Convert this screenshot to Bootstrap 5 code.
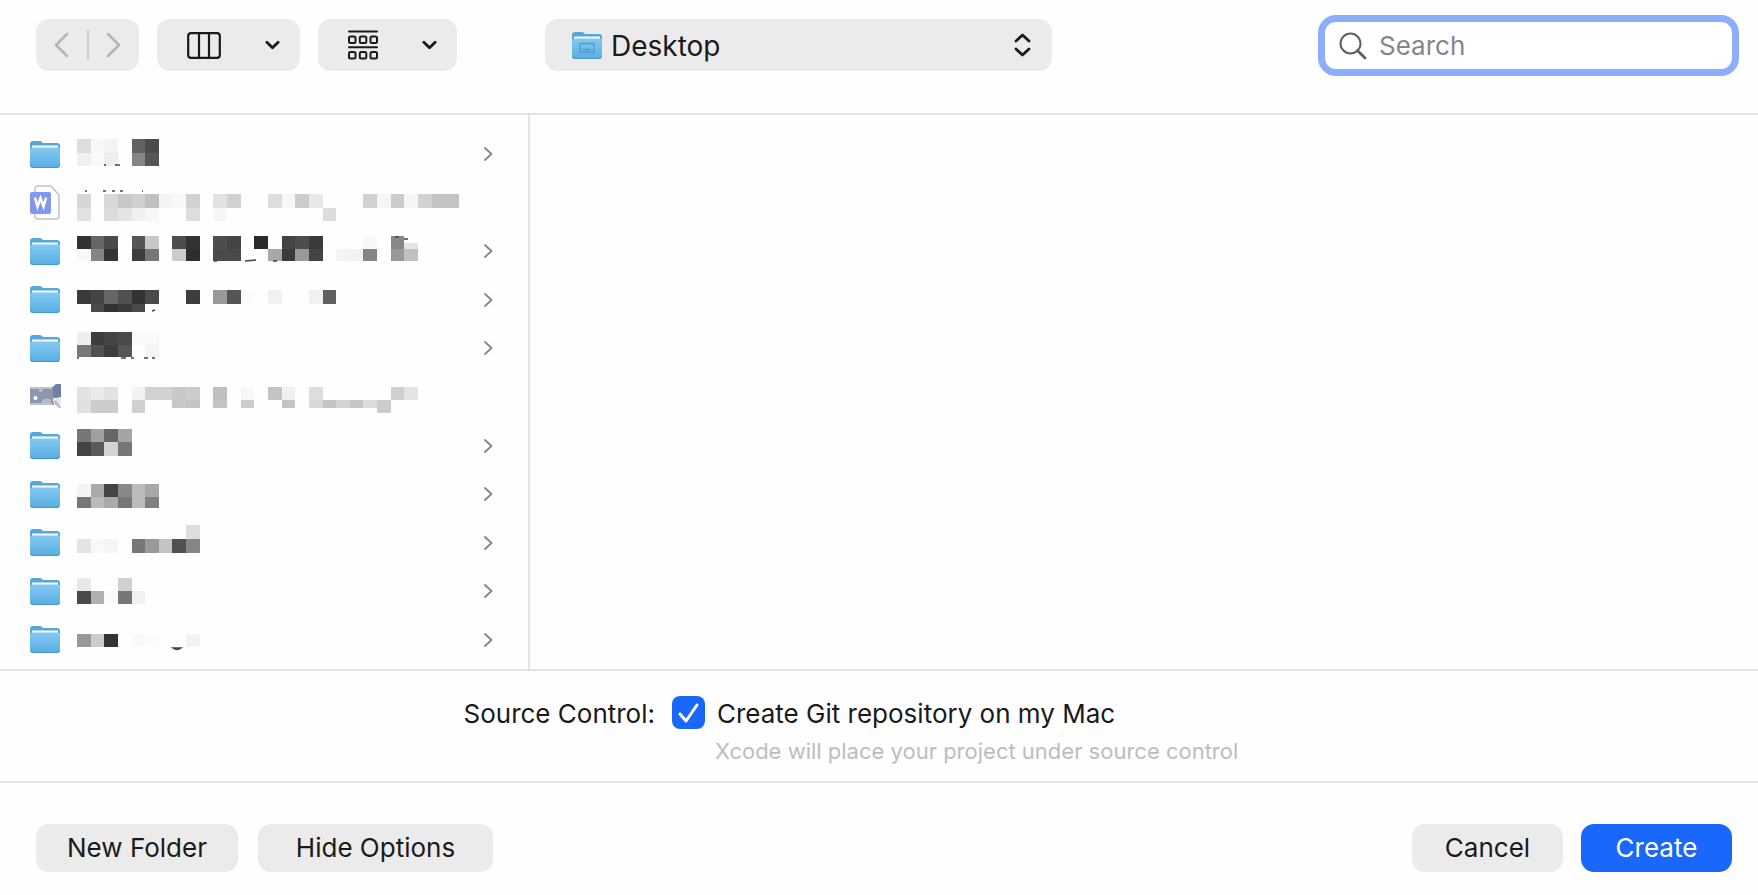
<!DOCTYPE html>
<html lang="en">
<head>
<meta charset="utf-8">
<meta name="viewport" content="width=device-width, initial-scale=1">
<title>Save Project</title>
<link href="https://cdn.jsdelivr.net/npm/bootstrap@5.3.0/dist/css/bootstrap.min.css" rel="stylesheet">
<style>
  body { background: #fefefe; color: #1a1a1a; font-family: Inter, "Liberation Sans", sans-serif; font-size: 26px; line-height: 32px; }
  .rule-b { border-bottom: 2px solid #e2e3e3; }
  .toolbar { padding: 19px 26px 42px 36px; }
  .tool-gap { gap: 18px; }
  .act-gap { gap: 20px; }
  .soft { background: #ebebeb; border: 0; border-radius: 13px; color: #1a1a1a; }
  .soft:hover { background: #e2e2e2; }
  .tool { height: 52px; }
  .nav-pair { width: 103px; }
  .nav-pair .btn { border: 0; flex: 1 1 0; padding: 0; height: 52px; }
  .nav-pair .bar { width: 2px; height: 30px; background: #cfcfcf; }
  .view-btn { padding: 0 20px 0 30px; gap: 44px; }
  .place { width: 507px; margin-left: 88px; }
  .place select { width: 100%; padding: 2px 66px 0; appearance: none; font-size: 28px; }
  .place .lead-icon { position: absolute; left: 26px; top: 12px; pointer-events: none; }
  .place .end-icon { position: absolute; right: 21px; top: 14px; pointer-events: none; }
  .finder { width: 407px; }
  .finder input { height: 47px; border: 0; border-radius: 11px; padding: 0 16px 0 54px; font-size: 26px; background: #fff; box-shadow: 0 0 0 7px #8cadf9; }
  .finder input:focus { box-shadow: 0 0 0 7px #8cadf9; }
  .finder input::placeholder { color: #868686; opacity: 1; }
  .finder svg { position: absolute; left: 14px; top: 10px; pointer-events: none; }
  .files { flex: 0 0 530px; border-right: 2px solid #e2e3e3; padding: 15px 35px 5px 29px; }
  .file-row { flex: 1 1 0; min-height: 40px; }
  .file-icon { width: 36px; margin-right: 12px; }
  .options { display: grid; grid-template-columns: 655fr 1086fr; column-gap: 17px; padding: 25px 0 16px; }
  .options .form-check-input { width: 33px; height: 33px; border-radius: 8px; margin: 0 12px 0 0; border: 0; }
  .options .form-check-input:checked { background-color: #1a68fb; background-size: 33px; background-image: url("data:image/svg+xml,%3csvg xmlns='http://www.w3.org/2000/svg' viewBox='0 0 33 33'%3e%3cpath d='M8 18l6 7L25 9' fill='none' stroke='%23fff' stroke-width='3' stroke-linecap='round' stroke-linejoin='round'/%3e%3c/svg%3e"); }
  .opt-label { line-height: 36px; }
  .hint { grid-column: 2; margin: 5px 0 0 43px; font-size: 22px; line-height: 28px; color: #bdbdbd; }
  .actions { padding: 41px 26px 23px 36px; }
  .act { height: 48px; padding: 0; font-size: 26px; line-height: 32px; }
  .act-s { width: 151px; } .act-m { width: 202px; } .act-l { width: 235px; }
  .go { background: #1a68fb; border: 0; border-radius: 13px; color: #fff; }
</style>
</head>
<body>
<svg class="position-absolute" width="0" height="0" aria-hidden="true">
  <defs>
    <linearGradient id="fold" x1="0" y1="0" x2="0" y2="1"><stop offset="0" stop-color="#84c9f1"/><stop offset="1" stop-color="#58ade2"/></linearGradient>
  </defs>
  <symbol id="folder" viewBox="0 0 32 29">
    <path d="M1 4Q1 1 4 1h7q1 0 2 1l1 1h14q3 0 3 3v6H1z" fill="#56a8da"/>
    <path d="M3 5.500h26v4H3z" fill="#f4fbff"/>
    <path d="M1 9.500q0-2 2-2h26q2 0 2 2v15.500q0 3-3 3H4q-3 0-3-3z" fill="url(#fold)"/>
    <path d="M1.500 25.500q.5 2 2.500 2h24q2 0 2.500-2" fill="none" stroke="#4894c4" stroke-width="1"/>
  </symbol>
  <symbol id="down" viewBox="0 0 16 10"><path d="M2 2l6 6 6-6" fill="none" stroke="#1a1a1a" stroke-width="3" stroke-linecap="round" stroke-linejoin="round"/></symbol>
  <symbol id="more" viewBox="0 0 9 14"><path d="M1 1l6.500 6L1 13" fill="none" stroke="#858585" stroke-width="1.800" stroke-linecap="round" stroke-linejoin="round"/></symbol>
  <symbol id="doc" viewBox="0 0 32 35">
    <path d="M6 7V4q0-3 3-3h13l8 9v21q0 3-3 3H9q-3 0-3-3v-3" fill="#fff" stroke="#c4c4c8" stroke-width="1.500"/>
    <rect x="1" y="7" width="21" height="22" rx="2" fill="#8197f4"/>
    <path d="M6 12.500l2.500 9 3-8.500 3 8.500 2.500-9" fill="none" stroke="#fff" stroke-width="2.500"/>
  </symbol>
  <symbol id="photo" viewBox="0 0 33 26">
    <path d="M1 3h22l4-3h5v13l-7 2v6H3l-2-2z" fill="#8c97ae"/>
    <path d="M1 3h22v2H1zM1 19h22v2H1z" fill="#bcc1ca"/>
    <path d="M24 4l3-4h5v13h-8z" fill="#7180a2"/>
    <path d="M10 5h4l-1 3h-3zM13 16l5-2 4 2v3h-9z" fill="#b2bac9"/>
    <circle cx="6.500" cy="14" r="2" fill="#fff"/>
    <path d="M24 14h8v10l-4-3-4-2z" fill="#e8e8ea"/><path d="M24 18l6 6h2l-5-8z" fill="#b8bbc3"/>
  </symbol>
</svg>

<div class="min-vh-100 d-flex flex-column">
  <header class="toolbar rule-b d-flex align-items-center">
    <div class="d-flex tool-gap">
      <div class="nav-pair soft tool d-flex align-items-center" role="group" aria-label="History">
        <button type="button" class="btn d-flex align-items-center justify-content-center" aria-label="Back">
          <svg width="15" height="26" viewBox="0 0 15 26"><path d="M13 2L2 13l11 11" fill="none" stroke="#b5b5b5" stroke-width="2.500" stroke-linecap="round" stroke-linejoin="round"/></svg>
        </button>
        <span class="bar"></span>
        <button type="button" class="btn d-flex align-items-center justify-content-center" aria-label="Forward">
          <svg width="15" height="26" viewBox="0 0 15 26"><path d="M2 2l11 11L2 24" fill="none" stroke="#b5b5b5" stroke-width="2.500" stroke-linecap="round" stroke-linejoin="round"/></svg>
        </button>
      </div>
      <button type="button" class="btn soft tool view-btn d-flex align-items-center" aria-label="Column view">
        <svg width="34" height="27" viewBox="0 0 34 27"><path d="M4 1.200h26q2.800 0 2.800 2.800v19q0 2.800-2.800 2.800H4Q1.200 25.800 1.200 23V4Q1.200 1.200 4 1.200zM12 1.500v24M22 1.500v24" fill="none" stroke="#1a1a1a" stroke-width="2.200"/></svg>
        <svg width="15" height="10"><use href="#down"/></svg>
      </button>
      <button type="button" class="btn soft tool view-btn d-flex align-items-center" aria-label="Group items">
        <svg width="30" height="30" viewBox="0 0 30 30" fill="none" stroke="#1a1a1a" stroke-width="2" stroke-linecap="round">
          <path d="M1 1.500h28M1 17.200h28"/>
          <rect x="1" y="6.500" width="6.500" height="6.500" rx="1.500"/><rect x="11.800" y="6.500" width="6.500" height="6.500" rx="1.500"/><rect x="22.500" y="6.500" width="6.500" height="6.500" rx="1.500"/>
          <rect x="1" y="22" width="6.500" height="6.500" rx="1.500"/><rect x="11.800" y="22" width="6.500" height="6.500" rx="1.500"/><rect x="22.500" y="22" width="6.500" height="6.500" rx="1.500"/>
        </svg>
        <svg width="15" height="10"><use href="#down"/></svg>
      </button>
    </div>
    <div class="place position-relative">
      <select class="soft tool" aria-label="Location"><option>Desktop</option></select>
      <svg class="lead-icon" width="32" height="29" viewBox="0 0 32 29"><use href="#folder"/><path d="M9 12.500h14v8.500H9zM16 18.500v2.500M12 18.500h8" fill="none" stroke="#4f9fce" stroke-width="1.400"/></svg>
      <svg class="end-icon" width="17" height="24" viewBox="0 0 17 24"><path d="M2 8l6.500-6L15 8M2 16l6.500 6 6.500-6" fill="none" stroke="#1a1a1a" stroke-width="2.800" stroke-linecap="round" stroke-linejoin="round"/></svg>
    </div>
    <div class="finder position-relative ms-auto">
      <input type="search" class="form-control" placeholder="Search" aria-label="Search">
      <svg width="28" height="28" viewBox="0 0 28 28"><path d="M18.500 18.500l7.500 7.500" stroke="#606060" stroke-width="2.800" stroke-linecap="round"/><circle cx="11.500" cy="11.500" r="10" fill="none" stroke="#606060" stroke-width="2"/></svg>
    </div>
  </header>

  <main class="flex-grow-1 d-flex rule-b">
    <div class="files d-flex flex-column" id="files" role="list" aria-label="Files"></div>
    <div class="flex-grow-1"></div>
  </main>

  <section class="options rule-b">
    <span class="opt-label text-end">Source Control:</span>
    <div class="d-flex align-items-start">
      <input class="form-check-input flex-shrink-0" type="checkbox" id="git" checked>
      <label class="opt-label" for="git">Create Git repository on my Mac</label>
    </div>
    <p class="hint">Xcode will place your project under source control</p>
  </section>

  <footer class="actions d-flex justify-content-between">
    <div class="d-flex act-gap">
      <button type="button" class="btn soft act act-m">New Folder</button>
      <button type="button" class="btn soft act act-l">Hide Options</button>
    </div>
    <div class="d-flex tool-gap">
      <button type="button" class="btn soft act act-s">Cancel</button>
      <button type="button" class="btn go act act-s">Create</button>
    </div>
  </footer>
</div>

<script src="https://cdn.jsdelivr.net/npm/bootstrap@5.3.0/dist/js/bootstrap.bundle.min.js"></script>
<script>
  // Each obscured name is a mosaic: bands of [top, height, "column:grey ..."] plus optional dark marks.
  const rows = [
    { icon: 'folder', bands: [[9,14,'0:dd 1:f8 2:f3 4:62 5:4a'],[23,13,'0:f0 1:f9 2:ee 4:85 5:55']], marks: 'M27 35h2M38 35h5' },
    { icon: 'doc', bands: [[15,14,'0:d6 2:d8 3:c8 4:d0 5:c0 6:f4 7:f8 8:d2 10:e2 11:d2 14:dd 15:f7 16:cc 17:e8 21:d2 22:f6 23:cc 24:f5 25:d2 26:c3 27:c3'],[29,13,'0:e2 2:dc 3:e4 4:f0 5:f7 8:dd 10:f6 18:dc']], marks: 'M8 12h2M26 12h3M35 12h3M43 12h3M65 12h1' },
    { icon: 'folder', bands: [[9,13,'0:33 1:66 2:4a 4:55 5:c8 7:4d 8:33 10:4d 11:44 13:2a 15:44 16:4d 17:3a 21:f8 23:88'],[16,6,'24:e4'],[22,12,'0:f8 1:85 2:33 4:3d 5:77 7:cc 8:2e 10:4a 11:4a 14:a8 15:3a 16:99 17:44 19:f4 20:f2 21:85 23:99 24:c0']], marks: 'M137 34h3M168 34l11-1M196 34h4M318 10h4M327 12h4' },
    { icon: 'folder', bands: [[14,14,'0:3a 1:44 2:66 3:50 4:33 5:4a 8:3d 10:99 11:55 12:fb 14:f1 17:f1 18:60'],[28,8,'1:4a 2:33 3:3a 4:4a']], marks: 'M75 35l3-1' },
    { icon: 'folder', bands: [[8,13,'0:ee 1:3d 2:44 3:4a 4:fa 5:fa'],[21,12,'0:77 1:50 2:3d 3:55 5:f4']], marks: 'M0 34h2M44 34h5M54 34h3M67 34h4M75 34h3' },
    { icon: 'photo', bands: [[14,13,'0:e2 1:ea 2:e2 4:f2 5:d2 6:d2 7:c8 8:cc 10:c0 12:f8 14:c4 15:f0 17:dd 23:d0 24:e4'],[27,13,'0:e0 1:cc 2:cc 4:d0 22:cc'],[27,8,'7:c8 8:c4 10:c4 12:cc 15:c4 17:d8 18:c4 19:d4 20:c6 21:dc']] },
    { icon: 'folder', bands: [[7,13,'0:77 1:a0 2:66 3:a4'],[20,14,'0:44 1:5a 2:d4 3:77']] },
    { icon: 'folder', bands: [[14,13,'0:f4 1:aa 2:44 3:88 4:bb 5:a8'],[27,11,'0:77 1:bb 2:aa 3:77 4:bb 5:80']] },
    { icon: 'folder', bands: [[6,14,'8:dd'],[20,14,'0:e4 1:f9 2:f5 4:77 5:99 6:c4 7:50 8:85']] },
    { icon: 'folder', bands: [[11,13,'0:e8 3:d0'],[24,13,'0:4a 1:b0 2:f9 3:77 4:f1']] },
    { icon: 'folder', bands: [[18,13,'0:99 1:cc 2:33 4:f9 5:fb 8:f3']], marks: 'M96 32q4 3 8 0z' }
  ];
  const sizes = { folder: [32, 29], doc: [32, 35], photo: [33, 26] };
  const edge = c => Math.round(c * 13.64);
  document.getElementById('files').innerHTML = rows.map(r => {
    const cells = r.bands.map(([y, h, list]) => list.split(' ').map(p => {
      const [c, g] = p.split(':');
      return `<rect x="${edge(+c)}" y="${y}" width="${edge(+c + 1) - edge(+c)}" height="${h}" fill="#${g}${g}${g}"/>`;
    }).join('')).join('');
    const [w, h] = sizes[r.icon];
    return `<div class="file-row d-flex align-items-center" role="listitem">
      <span class="file-icon d-flex"><svg width="${w}" height="${h}"><use href="#${r.icon}"/></svg></span>
      <svg width="385" height="48" viewBox="0 0 385 48" aria-label="Hidden name">${cells}${r.marks ? `<path d="${r.marks}" stroke="#444" stroke-width="1.500" fill="none"/>` : ''}</svg>
      ${r.icon === 'folder' ? '<svg class="ms-auto" width="9" height="14"><use href="#more"/></svg>' : ''}
    </div>`;
  }).join('');
</script>
</body>
</html>
